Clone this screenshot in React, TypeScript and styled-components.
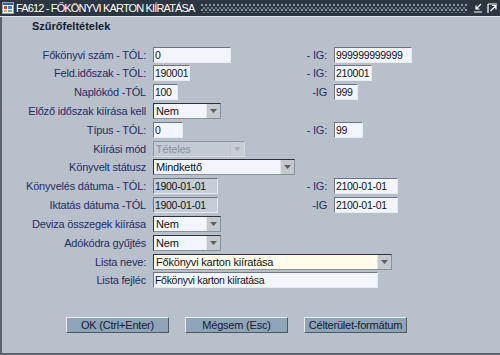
import { Fragment } from 'react';
import styled, { createGlobalStyle } from 'styled-components';

const GlobalStyle = createGlobalStyle`
  html, body {
    margin: 0;
    padding: 0;
    background: #b8c1cb;
  }
  body {
    font-family: "Liberation Sans", Arial, sans-serif;
  }
`;

const Window = styled.div`
  width: 500px;
  height: 355px;
  display: flex;
  flex-direction: column;
  background: #b8c1cb;
  overflow: hidden;
`;

const TitleBar = styled.div`
  height: 16px;
  flex: none;
  display: flex;
  align-items: center;
  padding: 0 2px;
  background: #2c3641;
  border-bottom: 1px solid #dfe5eb;
`;

const TitleText = styled.span`
  margin-left: 2px;
  color: #ffffff;
  font-size: 11px;
  letter-spacing: -0.85px;
  white-space: nowrap;
  line-height: 16px;
`;

const TitleFill = styled.div`
  flex: 1;
  height: 9px;
  margin: 0 6px 0 6px;
  background-image:
    radial-gradient(circle at 1px 1px, #8b97a5 0.7px, transparent 1.1px),
    radial-gradient(circle at 1px 1px, #6f7b89 0.7px, transparent 1.1px);
  background-size: 4px 5px, 4px 5px;
  background-position: 0 0, 2px 3px;
`;

const TitleButtons = styled.div`
  display: flex;
  gap: 4px;
  align-items: center;
`;

const Body = styled.div`
  flex: 1;
  border-left: 2px solid #5b646e;
  border-bottom: 2px solid #5b646e;
  display: flex;
  flex-direction: column;
`;

const SectionTitle = styled.div`
  margin: 2px 0 0 30px;
  font-size: 11px;
  font-weight: bold;
  line-height: 14px;
  color: #141c2c;
`;

const FormGrid = styled.div`
  margin-top: 13px;
  display: grid;
  grid-template-columns: 144px 127px 40px auto;
  column-gap: 7px;
  grid-auto-rows: 17px;
  row-gap: 1.83px;
  align-items: center;
`;

const Label = styled.div`
  grid-column: 1;
  text-align: right;
  white-space: nowrap;
  font-size: 11px;
  letter-spacing: -0.2px;
  color: #1f2d63;
  line-height: 14px;
`;

const IgLabel = styled(Label)`
  grid-column: 3;
`;

const Cell = styled.div<{ $col: string }>`
  grid-column: ${(p) => p.$col};
  display: flex;
  align-items: center;
`;

type Tone = 'plain' | 'off' | 'cream';

const toneBg: Record<Tone, string> = {
  plain: '#f3f5fc',
  off: '#c6cdd6',
  cream: '#fffbea',
};

const TextBox = styled.input<{ $w: number; $tone: Tone }>`
  width: ${(p) => p.$w}px;
  height: 16px;
  box-sizing: border-box;
  margin: 0;
  padding: 0 1px;
  border: 1px solid;
  border-color: #6d7680 #e6eaf0 #e6eaf0 #6d7680;
  background: ${(p) => toneBg[p.$tone]};
  color: #111418;
  font-family: "Liberation Sans", Arial, sans-serif;
  font-size: 10.5px;
  letter-spacing: -0.3px;
  outline: none;
`;

const SelectBox = styled.div<{ $w: number; $tone: Tone }>`
  width: ${(p) => p.$w}px;
  height: 16px;
  box-sizing: border-box;
  display: flex;
  align-items: stretch;
  border: 1px solid;
  border-color: ${(p) =>
    p.$tone === 'off' ? '#8e969f #d5dae0 #d5dae0 #8e969f' : '#2f3339 #8a9096 #8a9096 #2f3339'};
  background: ${(p) => (p.$tone === 'off' ? '#c3cad3' : toneBg[p.$tone])};
`;

const SelectText = styled.span<{ $off: boolean }>`
  flex: 1;
  padding-left: 2px;
  font-size: 11px;
  letter-spacing: -0.2px;
  line-height: 14px;
  white-space: nowrap;
  overflow: hidden;
  color: ${(p) => (p.$off ? '#8793a2' : '#111418')};
`;

const Arrow = styled.span<{ $off: boolean }>`
  width: 13px;
  display: grid;
  place-items: center;
  background: ${(p) => (p.$off ? '#c9ced5' : '#c5c9ce')};
  border-left: 1px solid ${(p) => (p.$off ? '#bcc2ca' : '#e2e5e8')};
  svg {
    fill: ${(p) => (p.$off ? '#a8afb8' : '#5a5f66')};
  }
`;

const ButtonRow = styled.div`
  margin-top: 28px;
  padding-left: 64px;
  display: flex;
  gap: 16px;
`;

const Button = styled.button`
  width: 103px;
  height: 16px;
  box-sizing: border-box;
  margin: 0;
  padding: 0;
  background: #8fa4b7;
  border: 1px solid;
  border-color: #e6edf3 #4b5865 #4b5865 #e6edf3;
  color: #15202f;
  font-family: "Liberation Sans", Arial, sans-serif;
  font-size: 11px;
  letter-spacing: -0.2px;
  line-height: 14px;
`;

type FieldSpec = { kind: 'input' | 'select'; w: number; value: string; tone?: Tone };
type RowSpec = { label: string; from: FieldSpec; ig?: { label: string; field: FieldSpec } };

const rows: RowSpec[] = [
  {
    label: 'Főkönyvi szám - TÓL:',
    from: { kind: 'input', w: 78, value: '0' },
    ig: { label: '- IG:', field: { kind: 'input', w: 78, value: '999999999999' } },
  },
  {
    label: 'Feld.időszak - TÓL:',
    from: { kind: 'input', w: 37, value: '190001' },
    ig: { label: '- IG:', field: { kind: 'input', w: 38, value: '210001' } },
  },
  {
    label: 'Naplókód -TÓL',
    from: { kind: 'input', w: 25, value: '100' },
    ig: { label: '-IG', field: { kind: 'input', w: 24, value: '999' } },
  },
  { label: 'Előző időszak kiírása kell', from: { kind: 'select', w: 68, value: 'Nem' } },
  {
    label: 'Típus - TÓL:',
    from: { kind: 'input', w: 30, value: '0' },
    ig: { label: '- IG:', field: { kind: 'input', w: 29, value: '99' } },
  },
  { label: 'Kiírási mód', from: { kind: 'select', w: 92, value: 'Tételes', tone: 'off' } },
  { label: 'Könyvelt státusz', from: { kind: 'select', w: 142, value: 'Mindkettő' } },
  {
    label: 'Könyvelés dátuma - TÓL:',
    from: { kind: 'input', w: 65, value: '1900-01-01', tone: 'off' },
    ig: { label: '- IG:', field: { kind: 'input', w: 64, value: '2100-01-01' } },
  },
  {
    label: 'Iktatás dátuma -TÓL',
    from: { kind: 'input', w: 65, value: '1900-01-01', tone: 'off' },
    ig: { label: '-IG', field: { kind: 'input', w: 64, value: '2100-01-01' } },
  },
  { label: 'Deviza összegek kiírása', from: { kind: 'select', w: 68, value: 'Nem' } },
  { label: 'Adókódra gyűjtés', from: { kind: 'select', w: 68, value: 'Nem' } },
  {
    label: 'Lista neve:',
    from: { kind: 'select', w: 239, value: 'Főkönyvi karton kiíratása', tone: 'cream' },
  },
  { label: 'Lista fejléc', from: { kind: 'input', w: 225, value: 'Főkönyvi karton kiíratása' } },
];

const Field = ({ spec }: { spec: FieldSpec }) => {
  const tone = spec.tone ?? 'plain';
  if (spec.kind === 'select') {
    const off = tone === 'off';
    return (
      <SelectBox $w={spec.w} $tone={tone}>
        <SelectText $off={off}>{spec.value}</SelectText>
        <Arrow $off={off}>
          <svg width="7" height="4" viewBox="0 0 7 4">
            <path d="M0 0h7L3.5 4z" />
          </svg>
        </Arrow>
      </SelectBox>
    );
  }
  return <TextBox $w={spec.w} $tone={tone} defaultValue={spec.value} readOnly />;
};

const AppIcon = () => (
  <svg width="12" height="12" viewBox="0 0 12 12">
    <rect x="0.5" y="0.5" width="11" height="11" fill="#f4f4f4" stroke="#9aa4b0" />
    <rect x="1" y="1" width="10" height="2" fill="#2f5fb8" />
    <rect x="2" y="4" width="3" height="3" fill="#d23a2a" />
    <rect x="6" y="4" width="4" height="3" fill="#3d7fd0" />
    <rect x="2" y="8" width="3" height="2" fill="#e0b020" />
    <rect x="6" y="8" width="4" height="2" fill="#8a9aae" />
  </svg>
);

const MinimizeIcon = () => (
  <svg width="10" height="10" viewBox="0 0 10 10" fill="none" stroke="#ffffff" strokeWidth="1.2">
    <path d="M8 1L3 6M3 2.5V6h3.5M1 9h8" />
  </svg>
);

const MaximizeIcon = () => (
  <svg width="11" height="11" viewBox="0 0 11 11" fill="none" stroke="#ffffff" strokeWidth="1.2">
    <path d="M1 1h9M1 1v9M3.5 8L9 2.5M5 2.5h4v4" />
  </svg>
);

export default function App() {
  return (
    <>
      <GlobalStyle />
      <Window>
        <TitleBar>
          <AppIcon />
          <TitleText>FA612 - FŐKÖNYVI KARTON KIÍRATÁSA</TitleText>
          <TitleFill />
          <TitleButtons>
            <MinimizeIcon />
            <MaximizeIcon />
          </TitleButtons>
        </TitleBar>
        <Body>
          <SectionTitle>Szűrőfeltételek</SectionTitle>
          <FormGrid>
            {rows.map((row) => (
              <Fragment key={row.label}>
                <Label>{row.label}</Label>
                <Cell $col={row.ig ? '2' : '2 / -1'}>
                  <Field spec={row.from} />
                </Cell>
                {row.ig && (
                  <>
                    <IgLabel>{row.ig.label}</IgLabel>
                    <Cell $col="4">
                      <Field spec={row.ig.field} />
                    </Cell>
                  </>
                )}
              </Fragment>
            ))}
          </FormGrid>
          <ButtonRow>
            <Button>OK (Ctrl+Enter)</Button>
            <Button>Mégsem (Esc)</Button>
            <Button>Célterület-formátum</Button>
          </ButtonRow>
        </Body>
      </Window>
    </>
  );
}
